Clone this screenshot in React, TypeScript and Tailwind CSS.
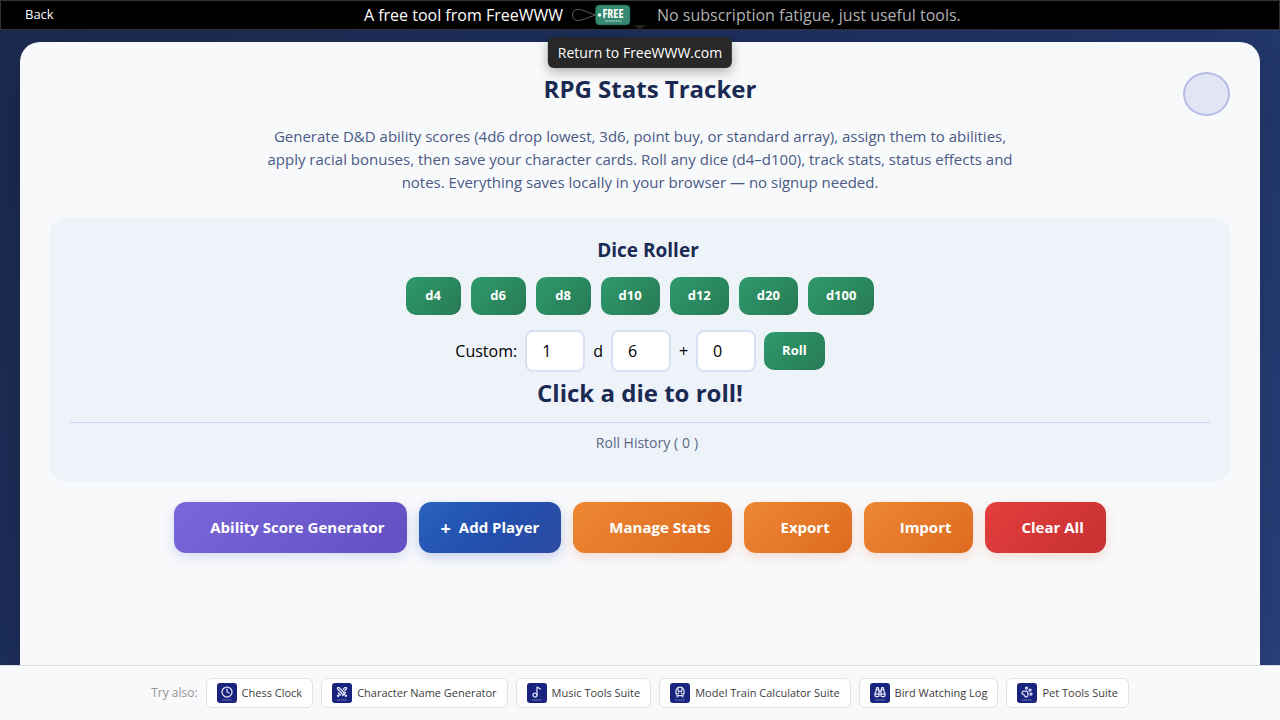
import { Binoculars, Clock, Music2, PawPrint, Swords, TrainFront } from 'lucide-react';
import type { LucideIcon } from 'lucide-react';
import clsx from 'clsx';

const dice = ['d4', 'd6', 'd8', 'd10', 'd12', 'd20', 'd100'];

const orange = "from-[#ee8733] to-[#dd6b20] shadow-[0_4px_12px_rgba(237,110,50,0.22)]";

const actions = [
  { label: "Ability Score Generator", style: "from-[#7a68da] to-[#6250c2] shadow-[0_4px_12px_rgba(90,103,216,0.22)]" },
  { label: "Add Player", icon: "+", style: "from-[#2a62c0] via-[#2250ae] to-[#2c4ba0] shadow-[0_4px_12px_rgba(60,90,200,0.28)]" },
  { label: "Manage Stats", style: orange },
  { label: "Export", style: orange },
  { label: "Import", style: orange },
  { label: "Clear All", style: "from-[#e53e3e] to-[#c53030] shadow-[0_4px_12px_rgba(237,110,50,0.22)]" }
];

const related: { label: string; icon: LucideIcon }[] = [
  { label: "Chess Clock", icon: Clock },
  { label: "Character Name Generator", icon: Swords },
  { label: "Music Tools Suite", icon: Music2 },
  { label: "Model Train Calculator Suite", icon: TrainFront },
  { label: "Bird Watching Log", icon: Binoculars },
  { label: "Pet Tools Suite", icon: PawPrint }
];

function PriceTag() {
  return (
    <svg width="60" height="22" viewBox="0 0 60 22" aria-hidden="true">
      <path d="M28 11C19 11 13 5 6 5.500C0 6.500 0 15.500 6 16.500C13 17 19 11 28 11" fill="none" stroke="#777" strokeWidth="0.8" />
      <rect x="24.500" y="1" width="34.500" height="20" rx="4" fill="#378b73" stroke="#1f5848" strokeWidth="0.6" />
      <circle cx="28.500" cy="11" r="1.700" fill="#fff" />
      <text x="42" y="14" textAnchor="middle" fill="#fff" fontSize="12" fontWeight="700" fontFamily="'Open Sans Condensed', 'Liberation Sans Narrow', 'Open Sans', sans-serif">FREE</text>
      <path d="M34 17H51" stroke="#cfe8df" strokeWidth="1.200" strokeDasharray="1.500 0.600" />
    </svg>
  );
}

function TopBar() {
  return (
    <header className="relative flex h-[30px] items-center border border-[#333] bg-black pr-2 text-white">
      <a href="#" className="pl-6 text-[13px]">Back</a>
      <div className="flex flex-1 items-center justify-center">
        <a href="#" className="flex items-center gap-2">
          A free tool from FreeWWW
          <PriceTag />
        </a>
        <span className="ml-[26px] text-[#b3b3b3]">No subscription fatigue, just useful tools.</span>
      </div>
      <div className="absolute left-1/2 top-6 -translate-x-1/2 border-x-[6px] border-t-[6px] border-x-transparent border-t-[#222]" />
      <div
        role="tooltip"
        className="absolute left-1/2 top-9 z-10 -translate-x-1/2 whitespace-nowrap rounded-md bg-[#282828] px-2.5 py-1.5 text-sm leading-[19px] shadow-[0_4px_12px_rgba(0,0,0,0.3)]"
      >
        Return to FreeWWW.com
      </div>
    </header>
  );
}

function DieButton({ label }: { label: string }) {
  return (
    <button
      className="h-[38px] min-w-[55px] rounded-[10px] bg-linear-135 from-[#2f9a6b] to-[#277a55] px-[18px] text-[13px] font-bold text-white"
    >
      {label}
    </button>
  );
}

function NumberField({ label, value }: { label: string; value: number }) {
  return (
    <input
      type="number"
      aria-label={label}
      defaultValue={value}
      className="h-[42px] w-[60px] rounded-lg border-2 border-[#d9e0f3] bg-white pl-[15px] text-base text-black"
    />
  );
}

function DiceRoller() {
  return (
    <section className="mt-[23px] rounded-2xl bg-[#eef3fa] px-5 pb-[30px] pt-5 text-center">
      <h2 className="pl-4 text-[19px] font-bold leading-[26px] text-[#1a2a52]">Dice Roller</h2>
      <div className="mt-3.5 flex flex-wrap justify-center gap-2.5">
        {dice.map((die) => (
          <DieButton key={die} label={die} />
        ))}
      </div>
      <div className="mt-[15px] flex flex-wrap items-center justify-center gap-2 text-black">
        <span>Custom:</span>
        <NumberField label="Number of dice" value={1} />
        <span>d</span>
        <NumberField label="Sides" value={6} />
        <span>+</span>
        <NumberField label="Modifier" value={0} />
        <DieButton label="Roll" />
      </div>
      <div className="mt-1 text-2xl font-bold leading-[34px] text-[#1a2a52]">Click a die to roll!</div>
      <div className="mt-3 flex justify-center gap-1 border-t border-[#c9d8f0] pl-3.5 pt-2.5 text-sm leading-[19px] text-[#5a6788]">
        <span>Roll History (</span>
        <span>0</span>
        <span>)</span>
      </div>
    </section>
  );
}

function Footer() {
  return (
    <footer className="relative flex h-[55px] items-center justify-center gap-2 border-t border-[#d8dade] bg-[#f8f9fb] text-xs">
      <span className="text-[#949494]">Try also:</span>
      {related.map(({ label, icon: Icon }) => (
        <a
          key={label}
          href="#"
          className="flex h-[30px] items-center gap-[5px] rounded-md border border-[#dfe1e5] bg-white px-2.5 text-[11px] text-[#3c3c3c]"
        >
          <span className="flex h-5 w-5 flex-col items-center rounded-[3px] bg-[#1a237e] pt-[3px]">
            <Icon size={12} strokeWidth={2.5} className="text-[#dfe3f7]" />
            <svg width="12" height="3" viewBox="0 0 12 3" aria-hidden="true">
              <path d="M1 2H11" stroke="#7f87bd" strokeDasharray="1.500 0.500" />
            </svg>
          </span>
          {label}
        </a>
      ))}
    </footer>
  );
}

export default function App() {
  return (
    <div className="flex min-h-screen flex-col bg-linear-135 from-[#1a2a4e] via-[#1f3263] to-[#2a4480] font-['Open_Sans',sans-serif]">
      <TopBar />
      <main className="flex flex-1 flex-col px-5 pt-3">
        <div className="relative flex-1 rounded-t-[20px] bg-[#f8f9fb] p-[30px] shadow-[0_20px_60px_rgba(0,0,0,0.2)]">
          <button
            aria-label="Toggle theme"
            className="absolute right-[30px] top-[30px] h-11 w-[47px] rounded-[50%] border-2 border-[#b4bce6] bg-[#e1e5f4]"
          />
          <h1 className="pl-5 text-center text-2xl font-bold leading-[34px] text-[#1a2a52]">RPG Stats Tracker</h1>
          <p className="mx-auto mt-[19px] max-w-[760px] text-center text-[15px] leading-[23px] text-[#4a5a85]">
            Generate D&amp;D ability scores (4d6 drop lowest, 3d6, point buy, or standard array), assign them to abilities,
            apply racial bonuses, then save your character cards. Roll any dice (d4–d100), track stats, status effects and
            notes. Everything saves locally in your browser — no signup needed.
          </p>
          <DiceRoller />
          <div className="mt-5 flex flex-wrap justify-center gap-3">
            {actions.map((action) => (
              <button
                key={action.label}
                className={clsx(
                  "flex h-[51px] items-center gap-2 rounded-xl bg-linear-135 px-[22px] text-[15px] font-bold text-white",
                  action.style
                )}
              >
                <span className={action.icon ? "text-lg" : "w-1.5"}>{action.icon}</span>
                {action.label}
              </button>
            ))}
          </div>
        </div>
      </main>
      <Footer />
    </div>
  );
}
